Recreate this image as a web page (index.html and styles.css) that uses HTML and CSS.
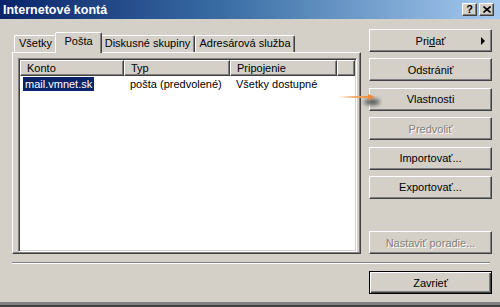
FILE: index.html
```html
<!DOCTYPE html>
<html lang="sk">
    <head>
        <meta charset="UTF-8" />
        <meta name="viewport" content="width=device-width, initial-scale=1.0" />
        <title>Internetové kontá</title>
        <link rel="stylesheet" href="styles.css">
    </head>
    <body>
        <div class="win">
            <!-- 타이틀바 -->
            <div class="titlebar">
                <span class="title">Internetové kontá</span>
                <div class="capBtns">
                    <span class="capBtn help">?</span>
                    <span class="capBtn">
                        <svg width="8" height="7" viewBox="0 0 8 7">
                            <path d="M0.5 0.5 L7.5 6.5 M7.5 0.5 L0.5 6.5" stroke="#000" stroke-width="1.6" />
                        </svg>
                    </span>
                </div>
            </div>

            <div class="client">
                <div class="mainRow">
                    <!-- 탭 + 목록 -->
                    <div class="leftCol">
                        <div class="tabs">
                            <div class="tab t1">Všetky</div>
                            <div class="tab t2 on">Pošta</div>
                            <div class="tab t3">Diskusné skupiny</div>
                            <div class="tab t4">Adresárová služba</div>
                        </div>
                        <div class="panel">
                            <div class="list">
                                <div class="lhead">
                                    <div class="hc c1">Konto</div>
                                    <div class="hc c2">Typ</div>
                                    <div class="hc c3">Pripojenie</div>
                                    <div class="hc c4"></div>
                                </div>
                                <div class="lrow">
                                    <div class="cell c1"><span class="sel">mail.vmnet.sk</span></div>
                                    <div class="cell c2">pošta (predvolené)</div>
                                    <div class="cell c3">Všetky dostupné</div>
                                </div>
                            </div>
                        </div>
                    </div>

                    <!-- 버튼들 -->
                    <div class="rightCol">
                        <button class="btn">Pri<u>d</u>ať<span class="tri"></span></button>
                        <button class="btn">Odstrániť</button>
                        <button class="btn">Vlastnosti</button>
                        <button class="btn off">Predvoliť</button>
                        <button class="btn">Importovať...</button>
                        <button class="btn">Exportovať...</button>
                        <button class="btn off last">Nastaviť poradie...</button>
                    </div>

                    <!-- 안내 화살표 -->
                    <svg class="arrow" width="46" height="22" viewBox="0 0 46 22">
                        <defs>
                            <linearGradient id="ag" gradientUnits="userSpaceOnUse" x1="2" y1="0" x2="36" y2="0">
                                <stop offset="0" stop-color="#f2a65e" stop-opacity="0" />
                                <stop offset="0.5" stop-color="#f2a65e" stop-opacity="0.9" />
                                <stop offset="1" stop-color="#ee8a3c" />
                            </linearGradient>
                            <filter id="blur" x="-50%" y="-100%" width="200%" height="300%">
                                <feGaussianBlur stdDeviation="2" />
                            </filter>
                        </defs>
                        <ellipse cx="36" cy="12" rx="8" ry="3" fill="#505050" filter="url(#blur)" />
                        <line x1="2" y1="7" x2="34" y2="7" stroke="url(#ag)" stroke-width="2" />
                        <path d="M32 4 L39 7 L32 10 Z" fill="#ee8a3c" />
                    </svg>
                </div>

                <div class="sep"></div>

                <div class="bottomRow">
                    <button class="btn def">Zavrieť</button>
                </div>
            </div>
        </div>
    </body>
</html>
```

FILE: styles.css
```css
html,
body {
    margin: 0;
    padding: 0;
}
body {
    width: 500px;
    height: 307px;
    overflow: hidden;
    background: #d4d0c8;
    font-family: "Liberation Sans", Arial, sans-serif;
    font-size: 11px;
    color: #000;
}

/* 창 전체 */
.win {
    box-sizing: border-box;
    height: 307px;
    border-bottom: 2px solid #404040;
    box-shadow: inset 0 -3px #808080;
}

/* 타이틀바 */
.titlebar {
    display: flex;
    align-items: center;
    height: 19px;
    padding: 0 6px 0 3px;
    background: linear-gradient(to right, #0a246a 0%, #3a6ea5 45%, #a6caf0 100%);
}
.title {
    color: #fff;
    font-weight: bold;
    font-size: 12.5px;
}
.capBtns {
    display: flex;
    gap: 2px;
    margin-left: auto;
}
.capBtn {
    display: flex;
    align-items: center;
    justify-content: center;
    box-sizing: border-box;
    width: 15px;
    height: 13px;
    background: #d4d0c8;
    border: 1px solid;
    border-color: #fff #404040 #404040 #fff;
    box-shadow: inset -1px -1px #808080;
}
.capBtn.help {
    font-weight: bold;
    font-size: 11px;
    line-height: 11px;
}

/* 본문 */
.client {
    padding: 10px 8px 0 12px;
}
.mainRow {
    position: relative;
    display: flex;
    gap: 8px;
}
.leftCol {
    flex-shrink: 0;
    width: 349px;
    margin-top: 3px;
}

/* 탭 */
.tabs {
    display: flex;
    align-items: flex-end;
    height: 20px;
    padding-left: 2px;
}
.tab {
    box-sizing: border-box;
    height: 17px;
    line-height: 15px;
    text-align: center;
    white-space: nowrap;
    border: 1px solid;
    border-bottom: none;
    border-color: #fff #404040 transparent #fff;
    border-radius: 2px 2px 0 0;
    box-shadow: inset -1px 0 #808080;
}
.t1 {
    width: 43px;
}
.t2 {
    width: 43px;
}
.t3 {
    width: 95px;
}
.t4 {
    width: 100px;
}
.tab.on {
    position: relative;
    z-index: 1;
    width: 47px;
    height: 21px;
    margin: 0 -2px -1px;
    line-height: 16px;
    background: #d4d0c8;
}

.panel {
    box-sizing: border-box;
    height: 202px;
    padding: 5px 3px 1px 5px;
    border: 1px solid;
    border-color: #fff #404040 #404040 #fff;
    box-shadow: inset -1px -1px #808080;
}

/* 목록 */
.list {
    box-sizing: border-box;
    height: 100%;
    background: #fff;
    border: 1px solid;
    border-color: #808080 #fff #fff #808080;
    box-shadow: inset 1px 1px #404040, inset -1px -1px #d4d0c8;
    padding: 1px;
}
.lhead,
.lrow {
    display: flex;
}
.hc {
    box-sizing: border-box;
    height: 16px;
    line-height: 14px;
    padding-left: 6px;
    background: #d4d0c8;
    border: 1px solid;
    border-color: #fff #404040 #404040 #fff;
    box-shadow: inset -1px -1px #808080;
}
.c1 {
    width: 104px;
}
.c2 {
    width: 106px;
}
.c3 {
    width: 107px;
}
.c4 {
    flex: 1;
}
.lrow {
    height: 16px;
    line-height: 14px;
    margin-top: 1px;
}
.cell {
    box-sizing: border-box;
    padding-left: 6px;
}
.cell.c1 {
    padding-left: 3px;
}
.sel {
    display: inline-block;
    padding: 0 2px;
    color: #fff;
    background: #0a246a;
}

/* 버튼 */
.rightCol {
    flex-shrink: 0;
    display: flex;
    flex-direction: column;
    gap: 6.4px;
}
.btn {
    position: relative;
    display: block;
    box-sizing: border-box;
    width: 123px;
    height: 23px;
    margin: 0;
    padding: 0;
    font-family: "Liberation Sans", Arial, sans-serif;
    font-size: 11px;
    color: #000;
    background: #d4d0c8;
    border: 1px solid;
    border-color: #fff #404040 #404040 #fff;
    border-radius: 0;
    box-shadow: inset -1px -1px #808080;
}
.btn u {
    text-decoration: underline;
}
.btn.off {
    color: #808080;
    text-shadow: 1px 1px #fff;
}
.btn.last {
    margin-top: auto;
}
.tri {
    position: absolute;
    top: 7px;
    right: 6px;
    width: 0;
    height: 0;
    border-top: 4px solid transparent;
    border-bottom: 4px solid transparent;
    border-left: 4px solid #000;
}

/* 화살표 */
.arrow {
    position: absolute;
    left: 324px;
    top: 61px;
}

/* 구분선 */
.sep {
    margin-top: 8px;
    width: 478px;
    border-top: 1px solid #808080;
    border-bottom: 1px solid #fff;
}
.bottomRow {
    display: flex;
    justify-content: flex-end;
    margin-top: 7px;
}
.btn.def {
    border-color: #000;
    box-shadow: inset 1px 1px #fff, inset -1px -1px #404040, inset -2px -2px #808080;
}
```
